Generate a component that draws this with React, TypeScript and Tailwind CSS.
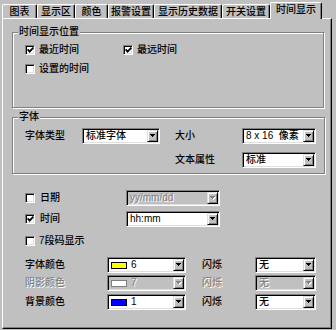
import React from "react";

function Tri({ disabled }: { disabled?: boolean }) {
  const c = disabled ? "#808080" : "#000";
  return (
    <svg width="6" height="4" viewBox="0 0 6 4" shapeRendering="crispEdges">
      {disabled && (
        <>
          <rect x="1" y="1" width="5" height="1" fill="#fff" />
          <rect x="2" y="2" width="3" height="1" fill="#fff" />
          <rect x="3" y="3" width="1" height="1" fill="#fff" />
        </>
      )}
      <rect x="0" y="0" width="5" height="1" fill={c} />
      <rect x="1" y="1" width="3" height="1" fill={c} />
      <rect x="2" y="2" width="1" height="1" fill={c} />
    </svg>
  );
}

function Check({ checked }: { checked?: boolean }) {
  return (
    <span className="w-[10px] h-[10px] shrink-0 bg-white border border-t-[#808080] border-l-[#808080] border-r-white border-b-white shadow-[inset_1px_1px_0_#000,inset_-1px_-1px_0_#dfdfdf] flex items-center justify-center">
      {checked && (
        <svg width="7" height="6" viewBox="0 0 7 6">
          <polyline points="0.6,2.4 2.6,4.6 6.4,0.6" fill="none" stroke="#000" strokeWidth="1.8" />
        </svg>
      )}
    </span>
  );
}

function Combo({
  className,
  children,
  disabled,
}: {
  className: string;
  children?: React.ReactNode;
  disabled?: boolean;
}) {
  return (
    <div
      className={`${className} h-[16px] shrink-0 flex p-px border border-t-[#808080] border-l-[#808080] border-r-white border-b-white shadow-[inset_1px_1px_0_#000,inset_-1px_-1px_0_#dfdfdf] ${
        disabled ? "bg-[#c0c0c0]" : "bg-white"
      }`}
    >
      <div
        className={`flex-1 flex items-center pl-[2px] overflow-hidden whitespace-nowrap leading-none ${
          disabled ? "text-[#808080] [text-shadow:1px_1px_0_#fff]" : "text-black"
        }`}
      >
        {children}
      </div>
      <div className="w-[11px] flex items-center justify-center bg-[#c0c0c0] border border-t-[#dfdfdf] border-l-[#dfdfdf] border-r-black border-b-black shadow-[inset_1px_1px_0_#fff,inset_-1px_-1px_0_#808080]">
        <Tri disabled={disabled} />
      </div>
    </div>
  );
}

function Group({
  title,
  className,
  children,
}: {
  title: string;
  className: string;
  children: React.ReactNode;
}) {
  return (
    <div
      className={`${className} relative border border-[#808080] shadow-[inset_1px_1px_0_#fff,1px_1px_0_#fff]`}
    >
      <span className="absolute left-[5px] top-[-7px] px-[1px] bg-[#c0c0c0] leading-none h-[12px] flex items-center">
        {title}
      </span>
      {children}
    </div>
  );
}

function Tab({ label, className, selected }: { label: string; className: string; selected?: boolean }) {
  if (selected) {
    return (
      <div
        className={`${className} relative z-10 mb-[-1px] h-[17px] flex items-center justify-center bg-[#c0c0c0] border-t border-l border-white border-r border-r-black rounded-t-[2px] shadow-[inset_-1px_0_0_#808080] pb-[2px]`}
      >
        {label}
      </div>
    );
  }
  return (
    <div
      className={`${className} h-[14px] flex items-center justify-center pt-[1px] border-t border-l border-white border-r border-r-black rounded-t-[2px] shadow-[inset_-1px_0_0_#808080]`}
    >
      {label}
    </div>
  );
}

export default function App() {
  return (
    <div className="w-[336px] h-[330px] bg-[#c0c0c0] text-black text-[10px] font-medium leading-none font-['Liberation_Sans','Noto_Sans_CJK_SC',sans-serif] overflow-hidden">
      <div className="flex items-end h-[18px] pl-[2px]">
        <Tab label="图表" className="w-[35px]" />
        <Tab label="显示区" className="w-[38px]" />
        <Tab label="颜色" className="w-[33px]" />
        <Tab label="报警设置" className="w-[46px]" />
        <Tab label="显示历史数据" className="w-[68px]" />
        <Tab label="开关设置" className="w-[48px]" />
        <Tab label="时间显示" className="w-[52px]" selected />
      </div>
      <div className="ml-[2px] w-[330px] h-[311px] border-t border-l border-white border-r border-b border-r-black border-b-black shadow-[inset_-1px_-1px_0_#808080] pl-[9px] pt-[13px]">
        <Group title="时间显示位置" className="w-[312px] h-[76px] pt-[7px] pl-[12px]">
          <div className="flex h-[19px] items-center">
            <div className="w-[98px] flex items-center gap-[4px]">
              <Check checked />
              <span>最近时间</span>
            </div>
            <div className="flex items-center gap-[4px]">
              <Check checked />
              <span>最远时间</span>
            </div>
          </div>
          <div className="flex h-[19px] items-center gap-[4px]">
            <Check />
            <span>设置的时间</span>
          </div>
        </Group>

        <Group title="字体" className="mt-[9px] w-[313px] h-[57px] pt-[10px] pl-[12px]">
          <div className="flex items-center h-[16px]">
            <span className="w-[57px]">字体类型</span>
            <Combo className="w-[78px]">标准字体</Combo>
            <span className="w-[15px]" />
            <span className="w-[67px]">大小</span>
            <Combo className="w-[74px]">8 x 16&nbsp; 像素</Combo>
          </div>
          <div className="flex items-center h-[16px] mt-[8px]">
            <span className="w-[150px]" />
            <span className="w-[67px]">文本属性</span>
            <Combo className="w-[74px]">标准</Combo>
          </div>
        </Group>

        <div className="pl-[13px]">
          <div className="mt-[16px] flex items-center h-[16px]">
            <div className="w-[101px] flex items-center gap-[5px]">
              <Check />
              <span>日期</span>
            </div>
            <Combo className="w-[94px]" disabled>
              yy/mm/dd
            </Combo>
          </div>
          <div className="mt-[5px] flex items-center h-[16px]">
            <div className="w-[101px] flex items-center gap-[5px]">
              <Check checked />
              <span>时间</span>
            </div>
            <Combo className="w-[94px]">hh:mm</Combo>
          </div>
          <div className="mt-[6px] flex items-center h-[16px] gap-[4px]">
            <Check />
            <span>7段码显示</span>
          </div>

          <div className="mt-[8px] flex items-center h-[16px]">
            <span className="w-[82px]">字体颜色</span>
            <Combo className="w-[79px]">
              <span className="w-[16px] h-[7px] border border-black bg-[#ffff00] shrink-0" />
              <span className="ml-[4px]">6</span>
            </Combo>
            <span className="w-[16px]" />
            <span className="w-[53px]">闪烁</span>
            <Combo className="w-[61px]">无</Combo>
          </div>
          <div className="mt-[2px] flex items-center h-[16px]">
            <span className="w-[82px] text-[#808080] [text-shadow:1px_1px_0_#fff]">阴影颜色</span>
            <Combo className="w-[79px]" disabled>
              <span className="w-[16px] h-[7px] border border-[#808080] bg-white shrink-0" />
              <span className="ml-[4px]">7</span>
            </Combo>
            <span className="w-[16px]" />
            <span className="w-[53px] text-[#808080] [text-shadow:1px_1px_0_#fff]">闪烁</span>
            <Combo className="w-[61px]" disabled>
              无
            </Combo>
          </div>
          <div className="mt-[3px] flex items-center h-[16px]">
            <span className="w-[82px]">背景颜色</span>
            <Combo className="w-[79px]">
              <span className="w-[16px] h-[7px] border border-black bg-[#0000ff] shrink-0" />
              <span className="ml-[4px]">1</span>
            </Combo>
            <span className="w-[16px]" />
            <span className="w-[53px]">闪烁</span>
            <Combo className="w-[61px]">无</Combo>
          </div>
        </div>
      </div>
    </div>
  );
}
